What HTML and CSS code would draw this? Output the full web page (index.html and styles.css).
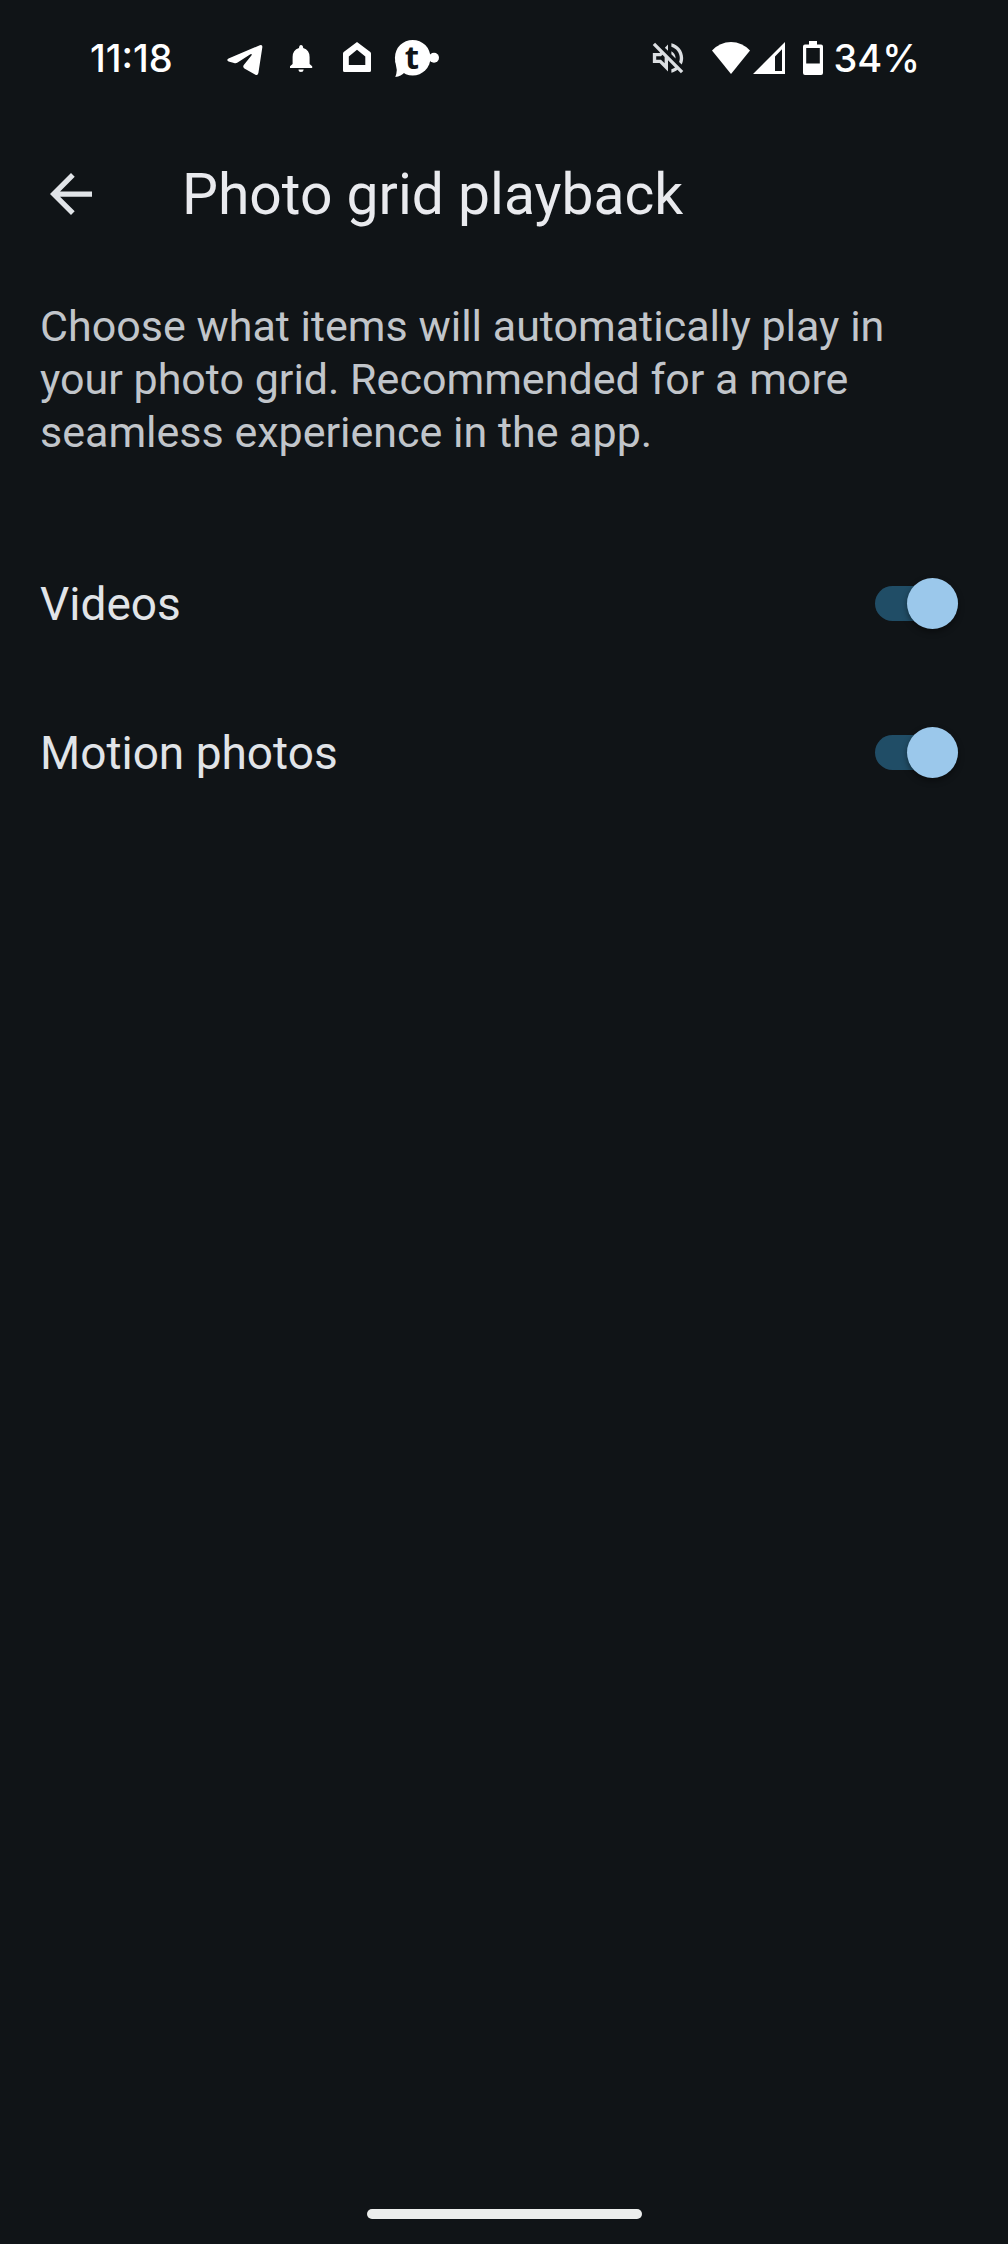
FILE: index.html
```html
<!DOCTYPE html>
<html lang="en">
<head>
  <meta charset="UTF-8" />
  <title>Photo grid playback</title>
  <meta name="viewport" content="width=device-width, initial-scale=1" />
  <link rel="stylesheet" href="styles.css">
</head>
<body>
  <div class="status-bar">
    <span class="clock">11:18</span>
    <div class="notifications">
      <svg width="40" height="40" viewBox="0 0 40 40" aria-hidden="true">
        <path d="M3.5 20.6 34.8 7.2Q37.8 6.2 37.3 9.6L33.4 35Q32.8 38 30 36.5L19.4 30.4Q17.4 29 18.8 27L26.6 17.2Q27.2 15.4 25.4 16.2L12.6 24.6Q11 25.8 9 25.1L3.6 23.5Q1 22.2 3.5 20.6Z"/>
      </svg>
      <svg width="40" height="40" viewBox="0 0 40 40" aria-hidden="true">
        <path d="M20 7Q22 7 22.2 10Q28.6 12 28.6 19V26L31.2 28.2V30H9V28.2L11.6 26V19Q11.6 12 18 10Q18.2 7 20 7ZM17.5 31.5H22.7Q22.5 34 20 34T17.5 31.5Z"/>
      </svg>
      <svg width="40" height="40" viewBox="0 0 40 40" aria-hidden="true">
        <path fill-rule="evenodd" d="M20 4 33.3 14Q34 14.6 34 15.5V32.5Q34 34 32.5 34H7.5Q6 34 6 32.5V15.5Q6 14.6 6.7 14ZM20 11.8 11.8 18.6V27H28.3V18.6Z"/>
      </svg>
      <svg width="48" height="48" viewBox="0 -4 48 48" aria-hidden="true">
        <circle cx="19.7" cy="19.7" r="17.8"/>
        <path d="M2 22 3.8 32Q3.6 36 2.3 39Q8 38.5 12 34Z"/>
        <circle cx="41" cy="19.7" r="5"/>
        <text class="chat-mark" x="19" y="31" text-anchor="middle">t</text>
      </svg>
    </div>
    <div class="system">
      <svg class="muted" width="32" height="32" viewBox="2.5 2.5 19 19" aria-hidden="true">
        <path d="M4.34 2.93L2.93 4.34 7.29 8.7 7 9H3v6h4l5 5v-6.59l4.18 4.18c-.65.49-1.38.88-2.18 1.11v2.06c1.34-.3 2.57-.92 3.61-1.75l2.05 2.05 1.41-1.41L4.34 2.93zM10 15.17L7.83 13H5v-2h2.83l.88-.88L10 11.41v3.76zM19 12c0 .82-.15 1.61-.41 2.34l1.53 1.53c.56-1.17.88-2.48.88-3.87 0-4.28-2.99-7.86-7-8.77v2.06c2.89.86 5 3.54 5 6.71zm-7-8l-1.88 1.88L12 7.76V4zm4.5 8c0-1.77-1.02-3.29-2.5-4.03v1.79l2.48 2.48c.01-.08.02-.16.02-.24z"/>
      </svg>
      <svg class="wifi" width="38" height="32" viewBox="0 0 38 32" aria-hidden="true">
        <path d="M0 8.5Q8 0 19 0T38 8.5L19 32Z"/>
      </svg>
      <svg class="signal" width="32" height="32" viewBox="0 0 32 32" aria-hidden="true">
        <path fill-rule="evenodd" d="M0 32 32 0V32ZM22 14.5V29H29V7.3Z"/>
      </svg>
      <svg class="battery" width="20" height="34" viewBox="0 0 20 34" aria-hidden="true">
        <path fill-rule="evenodd" d="M6 0H14V3.5H18Q20 3.5 20 5.5V32Q20 34 18 34H2Q0 34 0 32V5.5Q0 3.5 2 3.5H6ZM3.2 7V22.5H16.8V7Z"/>
      </svg>
      <span>34%</span>
    </div>
  </div>

  <header class="app-bar">
    <button class="back" type="button" aria-label="Back">
      <svg width="42" height="42" viewBox="4 4 16 16" aria-hidden="true">
        <path d="M20 11H7.83l5.59-5.59L12 4l-8 8 8 8 1.41-1.41L7.83 13H20v-2z"/>
      </svg>
    </button>
    <h1>Photo grid playback</h1>
  </header>

  <main>
    <p class="description">Choose what items will automatically play in your photo grid. Recommended for a more seamless experience in the app.</p>

    <div class="settings">
      <label class="setting" for="videos">
        <span>Videos</span>
        <input class="switch" type="checkbox" role="switch" id="videos" checked>
      </label>
      <label class="setting" for="motionPhotos">
        <span>Motion photos</span>
        <input class="switch" type="checkbox" role="switch" id="motionPhotos" checked>
      </label>
    </div>
  </main>

  <div class="nav-handle"></div>
</body>
</html>
```
FILE: styles.css
```css
body {
  display: flex;
  flex-direction: column;
  min-height: 100vh;
  margin: 0;
  background: #101417;
  color: #e1e4e8;
  font-family: Roboto, sans-serif;
}
svg {
  display: block;
  fill: currentColor;
}

/* Status bar */
.status-bar {
  display: flex;
  align-items: center;
  height: 116px;
  padding: 0 88px 0 90px;
  color: #fff;
  font-family: Inter, sans-serif;
  font-size: 38px;
  font-weight: 500;
}
.notifications {
  display: flex;
  align-items: center;
  gap: 16px;
  margin-left: 52px;
}
.chat-mark {
  fill: #101417;
  font-family: "Open Sans", sans-serif;
  font-size: 33px;
  font-weight: 700;
}
.system {
  display: flex;
  align-items: center;
  margin-left: auto;
}
.muted {
  margin-right: 28px;
  color: #dcdfe2;
}
.wifi {
  margin-right: 3px;
}
.signal {
  margin-right: 18px;
}
.battery {
  margin-right: 10px;
}

/* Title */
.app-bar {
  display: flex;
  align-items: center;
  gap: 90px;
  height: 156px;
  padding: 0 50px;
}
.back {
  padding: 0;
  border: 0;
  background: none;
  color: #e1e4e8;
  cursor: pointer;
}
h1 {
  margin: 0;
  color: #e9eaee;
  font-size: 57px;
  font-weight: 400;
}

/* Settings */
main {
  flex: 1;
}
.description {
  margin: 0;
  padding: 28px 40px 70px;
  color: #c1c5ca;
  font-size: 43px;
  line-height: 53px;
}
.setting {
  display: flex;
  align-items: center;
  justify-content: space-between;
  height: 149px;
  padding: 0 50px 0 40px;
  font-size: 46px;
}
.switch {
  appearance: none;
  display: flex;
  align-items: center;
  width: 83px;
  height: 35px;
  margin: 0;
  border-radius: 18px;
  background: #43474b;
  cursor: pointer;
}
.switch::before {
  content: "";
  flex: none;
  width: 51px;
  height: 51px;
  border-radius: 50%;
  background: #8b9197;
  box-shadow: 0 3px 6px rgba(0, 0, 0, 0.4);
}
.switch:checked {
  justify-content: flex-end;
  background: #204d66;
}
.switch:checked::before {
  background: #9bc8eb;
}

.nav-handle {
  align-self: center;
  width: 275px;
  height: 10px;
  margin-bottom: 25px;
  border-radius: 5px;
  background: #eceeed;
}
```
